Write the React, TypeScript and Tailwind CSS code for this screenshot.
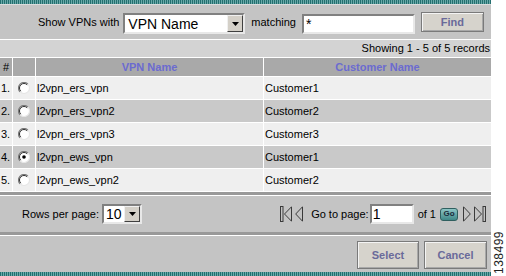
import React from "react";

const rows = [
  ["1.", "l2vpn_ers_vpn", "Customer1"],
  ["2.", "l2vpn_ers_vpn2", "Customer2"],
  ["3.", "l2vpn_ers_vpn3", "Customer3"],
  ["4.", "l2vpn_ews_vpn", "Customer1"],
  ["5.", "l2vpn_ews_vpn2", "Customer2"],
];

function Radio({ checked }: { checked: boolean }) {
  return (
    <svg width="12" height="12" viewBox="0 0 12 12">
      <circle cx="6" cy="6" r="5.5" fill="#ffffff" />
      <path d="M2.1 9.9 A5.5 5.5 0 0 1 9.9 2.1" fill="none" stroke="#7a7a7a" strokeWidth="1.2" />
      <path d="M2.8 9.2 A4.5 4.5 0 0 1 9.2 2.8" fill="none" stroke="#303030" strokeWidth="1" />
      <path d="M9.9 2.1 A5.5 5.5 0 0 1 2.1 9.9" fill="none" stroke="#e6e6e6" strokeWidth="1.2" />
      {checked && <circle cx="6" cy="6" r="1.8" fill="#000" />}
    </svg>
  );
}

function DropBtn() {
  return (
    <div className="w-[16px] self-stretch bg-[#d4d0c8] border border-t-[#f0f0f0] border-l-[#f0f0f0] border-b-[#404040] border-r-[#404040] flex items-center justify-center">
      <svg width="7" height="4" viewBox="0 0 7 4">
        <polygon points="0,0 7,0 3.5,4" fill="#000" />
      </svg>
    </div>
  );
}

function Teal() {
  return (
    <div className="h-[4px] bg-[repeating-linear-gradient(90deg,#236f6f_0px,#236f6f_1px,#6aa9a9_1px,#6aa9a9_2px)]" />
  );
}

function FirstIcon() {
  return (
    <svg width="12" height="16" viewBox="0 0 12 16">
      <rect x="0.5" y="0.5" width="2.5" height="15" fill="none" stroke="#3a3a3a" />
      <polygon points="11.5,0.8 4.5,8 11.5,15.2" fill="none" stroke="#3a3a3a" />
    </svg>
  );
}
function PrevIcon() {
  return (
    <svg width="8" height="16" viewBox="0 0 8 16">
      <polygon points="7.5,0.8 0.7,8 7.5,15.2" fill="none" stroke="#3a3a3a" />
    </svg>
  );
}
function NextIcon() {
  return (
    <svg width="8" height="16" viewBox="0 0 8 16">
      <polygon points="0.5,0.8 7.3,8 0.5,15.2" fill="none" stroke="#3a3a3a" />
    </svg>
  );
}
function LastIcon() {
  return (
    <svg width="12" height="16" viewBox="0 0 12 16">
      <polygon points="0.5,0.8 7.5,8 0.5,15.2" fill="none" stroke="#3a3a3a" />
      <rect x="9" y="0.5" width="2.5" height="15" fill="none" stroke="#3a3a3a" />
    </svg>
  );
}

const btn =
  "bg-[#d6d3cc] border border-[#7a7a7a] shadow-[inset_1px_1px_0_#f4f4f4,inset_-1px_-1px_0_#a8a8a8] text-[#6a6a9a] font-bold text-[11px] flex items-center justify-center";

export default function App() {
  return (
    <div className="w-[506px] h-[276px] bg-white flex font-['Liberation_Sans',Arial,sans-serif] text-[11px] text-black leading-none">
      <div className="w-[491px] flex flex-col">
        <Teal />
        {/* search */}
        <div className="h-[35px] bg-[#c4c4c4] border-t border-[#dcdcdc] flex items-center pl-[38px]">
          <span>Show VPNs with</span>
          <div className="ml-[4px] mt-[3px] w-[122px] h-[21px] bg-white border-2 border-t-[#808080] border-l-[#808080] border-b-[#e8e8e8] border-r-[#e8e8e8] flex items-stretch">
            <span className="flex-1 text-[14px] pl-[3px] flex items-center">VPN Name</span>
            <DropBtn />
          </div>
          <span className="ml-[6px]">matching</span>
          <div className="ml-[6px] mt-[3px] w-[113px] h-[20px] bg-white border-2 border-t-[#808080] border-l-[#808080] border-b-[#e8e8e8] border-r-[#e8e8e8] text-[14px] pl-[2px] pt-[1px]">
            *
          </div>
          <div className={btn + " ml-[6px] w-[63px] h-[20px]"}>Find</div>
        </div>
        <div className="h-px bg-white" />
        <div className="h-[17px] bg-[#d3d3d3] flex items-center justify-end pr-[1px]">
          Showing 1 - 5 of 5 records
        </div>
        <div className="h-px bg-white" />
        {/* table */}
        <div className="grid grid-cols-[12px_22px_227px_1fr] gap-px bg-white">
          <div className="h-[18px] bg-[#a9a9a9] pl-[3px] flex items-center">#</div>
          <div className="bg-[#a9a9a9]" />
          <div className="bg-[#a9a9a9] flex items-center justify-center font-bold text-[#6b6bd0]">VPN Name</div>
          <div className="bg-[#a9a9a9] flex items-center justify-center font-bold text-[#6b6bd0]">Customer Name</div>
          {rows.map((r, i) => {
            const bg = i % 2 === 0 ? "bg-[#efefef]" : "bg-[#c9c9c9]";
            return (
              <React.Fragment key={i}>
                <div className={bg + " h-[22px] pl-[1px] flex items-center"}>{r[0]}</div>
                <div className={bg + " flex items-center justify-center"}>
                  <Radio checked={i === 3} />
                </div>
                <div className={bg + " pl-[1px] flex items-center"}>{r[1]}</div>
                <div className={bg + " pl-[1px] flex items-center"}>{r[2]}</div>
              </React.Fragment>
            );
          })}
        </div>
        <div className="h-[3px] bg-[#999999] mt-px" />
        <div className="h-px bg-white" />
        {/* pagination */}
        <div className="h-[36px] bg-[#c4c4c4] flex items-center pl-[22px] pr-[5px]">
          <span>Rows per page:</span>
          <div className="ml-[3px] w-[40px] h-[20px] bg-white border-2 border-t-[#808080] border-l-[#808080] border-b-[#e8e8e8] border-r-[#e8e8e8] flex items-stretch">
            <span className="flex-1 text-[14px] pl-[2px] flex items-center">10</span>
            <DropBtn />
          </div>
          <div className="flex-1" />
          <FirstIcon />
          <div className="ml-[3px]">
            <PrevIcon />
          </div>
          <span className="ml-[8px]">Go to page:</span>
          <div className="ml-[1px] w-[44px] h-[20px] bg-white border-2 border-t-[#808080] border-l-[#808080] border-b-[#e8e8e8] border-r-[#e8e8e8] text-[14px] pl-[1px] flex items-center">
            1
          </div>
          <span className="ml-[4px]">of 1</span>
          <div className="ml-[4px] w-[18px] h-[13px] rounded-[3px] bg-[linear-gradient(#8cc4c4,#3f8787)] border border-[#2f5f5f] text-[8px] font-bold text-[#1a2a3a] flex items-center justify-center">
            Go
          </div>
          <div className="ml-[5px]">
            <NextIcon />
          </div>
          <div className="ml-[3px]">
            <LastIcon />
          </div>
        </div>
        <div className="h-[3px] bg-[#999999]" />
        <div className="h-px bg-white" />
        {/* buttons */}
        <div className="h-[36px] bg-[#c4c4c4] flex items-center justify-end pr-[4px] gap-[5px]">
          <div className={btn + " w-[62px] h-[28px] mt-[2px]"}>Select</div>
          <div className={btn + " w-[63px] h-[28px] mt-[2px]"}>Cancel</div>
        </div>
        <Teal />
      </div>
      <div className="flex-1 flex items-end justify-center pb-[2px]">
        <span className="[writing-mode:vertical-rl] rotate-180 text-[12px] text-[#222] tracking-[0.5px]">138499</span>
      </div>
    </div>
  );
}
